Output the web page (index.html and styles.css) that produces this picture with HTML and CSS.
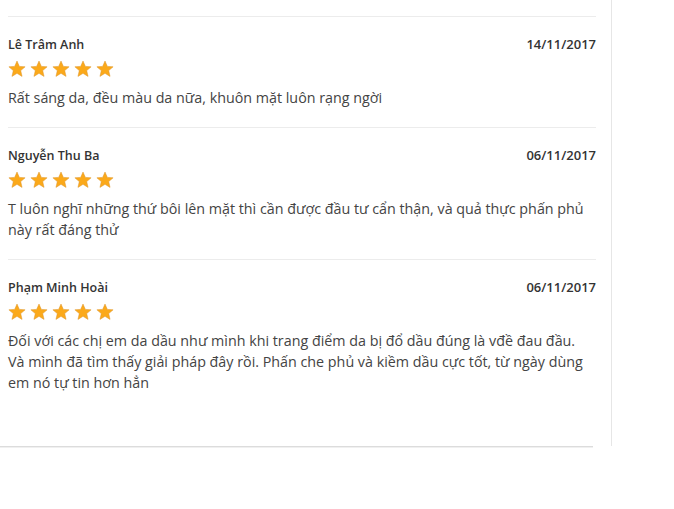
FILE: index.html
```html
<!DOCTYPE html>
<html lang="vi">
<head>
<meta charset="utf-8">
<link rel="stylesheet" href="styles.css">
</head>
<body>
<div class="page">
  <div class="panel">
    <div class="reviews">
      <div class="review">
        <div class="head"><span class="name">Lê Trâm Anh</span><span class="date">14/11/2017</span></div>
        <div class="stars">
          <svg class="star" viewBox="0 0 20 20"><polygon points="10,1.2 12.6,7.1 19,7.6 14.1,11.8 15.6,18.2 10,14.8 4.4,18.2 5.9,11.8 1,7.6 7.4,7.1"/></svg>
          <svg class="star" viewBox="0 0 20 20"><polygon points="10,1.2 12.6,7.1 19,7.6 14.1,11.8 15.6,18.2 10,14.8 4.4,18.2 5.9,11.8 1,7.6 7.4,7.1"/></svg>
          <svg class="star" viewBox="0 0 20 20"><polygon points="10,1.2 12.6,7.1 19,7.6 14.1,11.8 15.6,18.2 10,14.8 4.4,18.2 5.9,11.8 1,7.6 7.4,7.1"/></svg>
          <svg class="star" viewBox="0 0 20 20"><polygon points="10,1.2 12.6,7.1 19,7.6 14.1,11.8 15.6,18.2 10,14.8 4.4,18.2 5.9,11.8 1,7.6 7.4,7.1"/></svg>
          <svg class="star" viewBox="0 0 20 20"><polygon points="10,1.2 12.6,7.1 19,7.6 14.1,11.8 15.6,18.2 10,14.8 4.4,18.2 5.9,11.8 1,7.6 7.4,7.1"/></svg>
        </div>
        <p class="text">Rất sáng da, đều màu da nữa, khuôn mặt luôn rạng ngời</p>
      </div>
      <div class="review">
        <div class="head"><span class="name">Nguyễn Thu Ba</span><span class="date">06/11/2017</span></div>
        <div class="stars">
          <svg class="star" viewBox="0 0 20 20"><polygon points="10,1.2 12.6,7.1 19,7.6 14.1,11.8 15.6,18.2 10,14.8 4.4,18.2 5.9,11.8 1,7.6 7.4,7.1"/></svg>
          <svg class="star" viewBox="0 0 20 20"><polygon points="10,1.2 12.6,7.1 19,7.6 14.1,11.8 15.6,18.2 10,14.8 4.4,18.2 5.9,11.8 1,7.6 7.4,7.1"/></svg>
          <svg class="star" viewBox="0 0 20 20"><polygon points="10,1.2 12.6,7.1 19,7.6 14.1,11.8 15.6,18.2 10,14.8 4.4,18.2 5.9,11.8 1,7.6 7.4,7.1"/></svg>
          <svg class="star" viewBox="0 0 20 20"><polygon points="10,1.2 12.6,7.1 19,7.6 14.1,11.8 15.6,18.2 10,14.8 4.4,18.2 5.9,11.8 1,7.6 7.4,7.1"/></svg>
          <svg class="star" viewBox="0 0 20 20"><polygon points="10,1.2 12.6,7.1 19,7.6 14.1,11.8 15.6,18.2 10,14.8 4.4,18.2 5.9,11.8 1,7.6 7.4,7.1"/></svg>
        </div>
        <p class="text">T luôn nghĩ những thứ bôi lên mặt thì cần được đầu tư cẩn thận, và quả thực phấn phủ này rất đáng thử</p>
      </div>
      <div class="review">
        <div class="head"><span class="name">Phạm Minh Hoài</span><span class="date">06/11/2017</span></div>
        <div class="stars">
          <svg class="star" viewBox="0 0 20 20"><polygon points="10,1.2 12.6,7.1 19,7.6 14.1,11.8 15.6,18.2 10,14.8 4.4,18.2 5.9,11.8 1,7.6 7.4,7.1"/></svg>
          <svg class="star" viewBox="0 0 20 20"><polygon points="10,1.2 12.6,7.1 19,7.6 14.1,11.8 15.6,18.2 10,14.8 4.4,18.2 5.9,11.8 1,7.6 7.4,7.1"/></svg>
          <svg class="star" viewBox="0 0 20 20"><polygon points="10,1.2 12.6,7.1 19,7.6 14.1,11.8 15.6,18.2 10,14.8 4.4,18.2 5.9,11.8 1,7.6 7.4,7.1"/></svg>
          <svg class="star" viewBox="0 0 20 20"><polygon points="10,1.2 12.6,7.1 19,7.6 14.1,11.8 15.6,18.2 10,14.8 4.4,18.2 5.9,11.8 1,7.6 7.4,7.1"/></svg>
          <svg class="star" viewBox="0 0 20 20"><polygon points="10,1.2 12.6,7.1 19,7.6 14.1,11.8 15.6,18.2 10,14.8 4.4,18.2 5.9,11.8 1,7.6 7.4,7.1"/></svg>
        </div>
        <p class="text">Đối với các chị em da dầu như mình khi trang điểm da bị đổ dầu đúng là vđề đau đầu. Và mình đã tìm thấy giải pháp đây rồi. Phấn che phủ và kiềm dầu cực tốt, từ ngày dùng em nó tự tin hơn hẳn</p>
      </div>
    </div>
  </div>
  <div class="bottom-rule"></div>
</div>
</body>
</html>
```
FILE: styles.css
```css
html, body {
  margin: 0;
  padding: 0;
  background: #fff;
}
body {
  font-family: "Open Sans", "Noto Sans", sans-serif;
  color: #333;
}
.panel {
  width: 611px;
  height: 446px;
  border-right: 1px solid #e6e6e6;
}
.reviews {
  padding: 16px 15px 0 8px;
}
.review {
  border-top: 1px solid #ececec;
  padding: 18px 0 19px;
}
.head {
  display: flex;
  justify-content: space-between;
  align-items: center;
  height: 18px;
  font-weight: 600;
  color: #333;
}
.name {
  font-size: 12.5px;
}
.date {
  font-size: 13px;
}
.stars {
  display: flex;
  gap: 4px;
  margin-top: 7px;
  height: 18px;
}
.star {
  width: 18px;
  height: 18px;
  fill: #fba91a;
  stroke: #e0962a;
  stroke-width: 0.6;
}
.text {
  margin: 9px 0 0;
  padding-right: 6px;
  font-size: 14.3px;
  line-height: 21px;
  color: #444;
}
.bottom-rule {
  width: 593px;
  border-top: 1px solid #dcdcdc;
  border-bottom: 1px solid #f0f0f0;
}
```
